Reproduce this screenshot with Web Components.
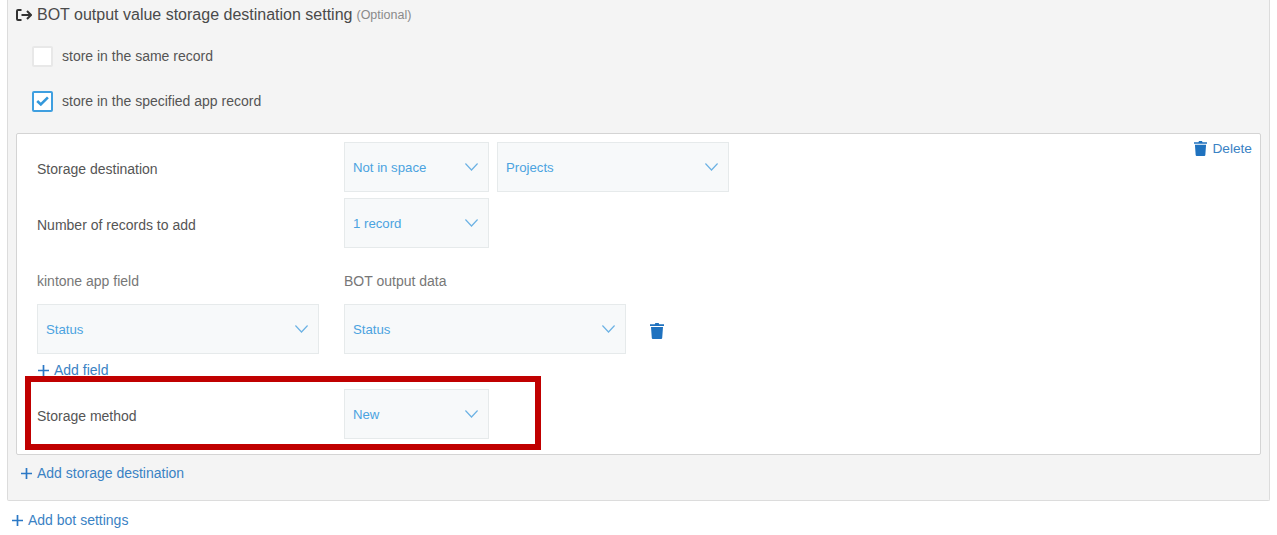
<!DOCTYPE html>
<html lang="en">
<head>
<meta charset="utf-8">
<title>BOT settings</title>
<style>
  html, body { margin: 0; height: 535px; overflow: hidden; background: #fff; }
  body { font: 14px/20px "Liberation Sans", Arial, sans-serif; color: #4a4a4a; }
</style>
</head>
<body>
<bot-settings-page></bot-settings-page>

<script>
// icons shared by the components below
const ICONS = {
  trash: `<svg viewBox="0 0 14 16" width="14" height="16" fill="currentColor"><path d="M4.800 1.200 5.400 0h3.200l.6 1.200H14v1.700H0V1.200z"/><path d="M1 4h12l-.8 11a1.100 1.100 0 0 1-1.100 1H2.900a1.100 1.100 0 0 1-1.100-1z"/></svg>`,
  trashSmall: `<svg viewBox="0 0 14 16" width="13" height="15" fill="currentColor"><path d="M4.800 1.200 5.400 0h3.200l.6 1.200H14v1.700H0V1.200z"/><path d="M1 4h12l-.8 11a1.100 1.100 0 0 1-1.100 1H2.900a1.100 1.100 0 0 1-1.100-1z"/></svg>`,
  plus: `<svg viewBox="0 0 11 11" width="11" height="11" fill="currentColor"><path d="M4.650 0h1.700v4.650H11v1.700H6.350V11h-1.700V6.350H0v-1.700h4.650z"/></svg>`,
  chevron: `<svg viewBox="0 0 13 8" width="13" height="8" fill="none" stroke="#6cb2e4" stroke-width="1.200"><path d="M.4.500 6.500 7l6.100-6.500"/></svg>`,
  exit: `<svg viewBox="0 0 16 12" width="16" height="12" fill="none" stroke="#333" stroke-width="2"><path d="M5.500 1H2a1 1 0 0 0-1 1v8a1 1 0 0 0 1 1h3.500"/><path d="M5.500 6h9.500M11 2l4 4-4 4"/></svg>`,
  check: `<svg viewBox="0 0 13 10" width="13" height="10" fill="none" stroke="#3498db" stroke-width="2.600"><path d="M1.200 5 4.800 8.400 11.900 1.400"/></svg>`
};

class XSelect extends HTMLElement {
  constructor() {
    super();
    this.attachShadow({ mode: 'open' });
    const width = this.getAttribute('width') || '145';
    this.shadowRoot.innerHTML = `
      <style>
        :host {
          display: flex;
          flex: none;
          align-items: center;
          justify-content: space-between;
          box-sizing: border-box;
          width: ${width}px;
          height: 50px;
          padding: 0 10px 0 8px;
          background: #f7f9fa;
          border: 1px solid #e6eaeb;
          color: #4ba3e0;
          font-size: 13.200px;
        }
        .text { padding-top: 2px; }
        svg { display: block; }
      </style>
      <span class="text"><slot></slot></span>${ICONS.chevron}
    `;
  }
}

class XCheck extends HTMLElement {
  constructor() {
    super();
    this.attachShadow({ mode: 'open' });
    const checked = this.hasAttribute('checked');
    this.shadowRoot.innerHTML = `
      <style>
        :host { display: flex; align-items: center; gap: 9px; height: 20px; margin-left: 16px; color: #555; }
        .box {
          display: flex;
          align-items: center;
          justify-content: center;
          box-sizing: border-box;
          width: 21px;
          height: 21px;
          background: #fff;
          border-radius: 2px;
          border: ${checked ? '2px solid #3f9fe0' : '2px solid #e8e8e8'};
        }
      </style>
      <span class="box">${checked ? ICONS.check : ''}</span><span><slot></slot></span>
    `;
  }
}

class XAddLink extends HTMLElement {
  constructor() {
    super();
    this.attachShadow({ mode: 'open' });
    this.shadowRoot.innerHTML = `
      <style>
        :host { display: flex; align-items: center; gap: 5px; height: 20px; color: #3a82c4; }
        svg { display: block; margin-left: 1px; color: #2b78c5; }
      </style>
      ${ICONS.plus}<span><slot></slot></span>
    `;
  }
}

class XFormRow extends HTMLElement {
  constructor() {
    super();
    this.attachShadow({ mode: 'open' });
    this.shadowRoot.innerHTML = `
      <style>
        :host { display: flex; align-items: flex-start; gap: 8px; }
        .label { flex: none; width: 299px; height: 50px; line-height: 54px; color: #555; }
      </style>
      <div class="label"><slot name="label"></slot></div>
      <slot></slot>
    `;
  }
}

class XDeleteLink extends HTMLElement {
  constructor() {
    super();
    this.attachShadow({ mode: 'open' });
    this.shadowRoot.innerHTML = `
      <style>
        :host { display: flex; align-items: center; gap: 5px; height: 14px; line-height: 14px; margin-left: auto; color: #3a82c4; font-size: 13.700px; }
        svg { display: block; margin-top: -1px; color: #1f72bf; }
      </style>
      ${ICONS.trashSmall}<span><slot></slot></span>
    `;
  }
}

class XHighlight extends HTMLElement {
  constructor() {
    super();
    this.attachShadow({ mode: 'open' });
    this.shadowRoot.innerHTML = `
      <style>
        :host {
          position: absolute;
          left: 25px;
          top: 376px;
          box-sizing: border-box;
          width: 516px;
          height: 74px;
          border: 6px solid #c00000;
        }
      </style>
    `;
  }
}

class StorageCard extends HTMLElement {
  constructor() {
    super();
    this.attachShadow({ mode: 'open' });
    this.shadowRoot.innerHTML = `
      <style>
        :host {
          display: block;
          box-sizing: border-box;
          height: 322px;
          padding: 8px 8px 0 20px;
          background: #fff;
          border: 1px solid #d4d4d4;
          border-radius: 2px;
        }
        .gap { margin-top: 6px; }
        .heads { display: flex; margin-top: 23px; height: 20px; color: #777; }
        .heads span { width: 307px; }
        .fields { display: flex; align-items: center; gap: 25px; margin-top: 13px; }
        .trash { display: block; color: #1f72bf; margin: 3px 0 0 -1px; }
        .trash svg { display: block; }
        .add { margin-top: 6px; }
        .method { margin-top: 9px; }
      </style>
      <x-form-row>
        <span slot="label">Storage destination</span>
        <x-select>Not in space</x-select>
        <x-select width="232">Projects</x-select>
        <x-delete-link>Delete</x-delete-link>
      </x-form-row>
      <x-form-row class="gap">
        <span slot="label">Number of records to add</span>
        <x-select>1 record</x-select>
      </x-form-row>
      <div class="heads"><span>kintone app field</span><span>BOT output data</span></div>
      <div class="fields">
        <x-select width="282">Status</x-select>
        <x-select width="282">Status</x-select>
        <span class="trash">${ICONS.trash}</span>
      </div>
      <x-add-link class="add">Add field</x-add-link>
      <x-form-row class="method">
        <span slot="label">Storage method</span>
        <x-select>New</x-select>
      </x-form-row>
    `;
  }
}

class BotSettingsPage extends HTMLElement {
  constructor() {
    super();
    this.attachShadow({ mode: 'open' });
    this.shadowRoot.innerHTML = `
      <style>
        :host { display: block; position: relative; height: 535px; }
        .panel {
          box-sizing: border-box;
          height: 501px;
          margin: 0 7px;
          padding: 0 8px;
          background: #f4f4f4;
          border: 1px solid #dcdcdc;
          border-top: 0;
          border-radius: 0 0 2px 2px;
        }
        .title { display: flex; align-items: center; gap: 4px; height: 30px; color: #4a4a4a; font-size: 16px; }
        .title svg { display: block; margin-right: 1px; }
        .title small { font-size: 12.500px; color: #8a8a8a; }
        .first { margin-top: 16px; }
        .second { margin-top: 25px; margin-bottom: 22px; }
        .add-dest { margin: 8px 0 0 4px; }
        .add-bot { margin: 9px 0 0 11px; }
      </style>
      <div class="panel">
        <div class="title">${ICONS.exit}<span>BOT output value storage destination setting</span><small>(Optional)</small></div>
        <x-check class="first">store in the same record</x-check>
        <x-check class="second" checked>store in the specified app record</x-check>
        <storage-card></storage-card>
        <x-add-link class="add-dest">Add storage destination</x-add-link>
      </div>
      <x-add-link class="add-bot">Add bot settings</x-add-link>
      <x-highlight></x-highlight>
    `;
  }
}

customElements.define('x-select', XSelect);
customElements.define('x-check', XCheck);
customElements.define('x-add-link', XAddLink);
customElements.define('x-form-row', XFormRow);
customElements.define('x-delete-link', XDeleteLink);
customElements.define('x-highlight', XHighlight);
customElements.define('storage-card', StorageCard);
customElements.define('bot-settings-page', BotSettingsPage);
</script>
</body>
</html>
